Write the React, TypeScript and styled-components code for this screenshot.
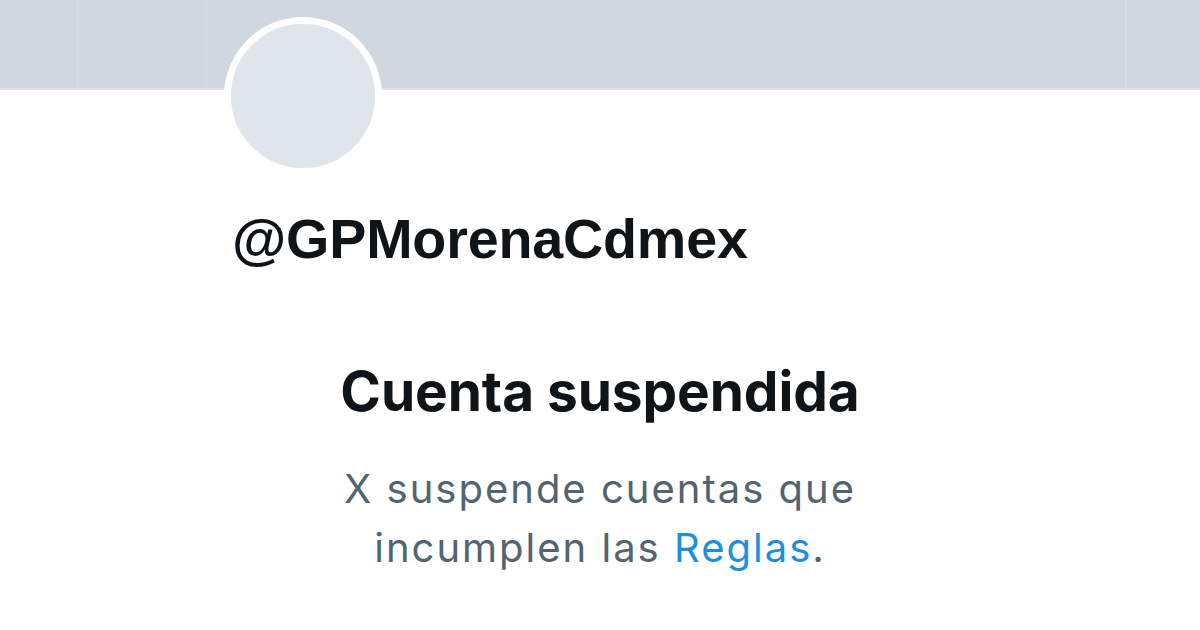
import React from "react";
import styled, { createGlobalStyle } from "styled-components";

const Global = createGlobalStyle`
  html, body { margin: 0; padding: 0; background: #ffffff; }
  body { width: 1200px; height: 630px; overflow: hidden; }
  * { box-sizing: border-box; }
`;

const Page = styled.div`
  width: 1200px;
  height: 630px;
  background: #ffffff;
  display: flex;
  flex-direction: column;
`;

const Banner = styled.div`
  height: 90px;
  flex: none;
  background:
    linear-gradient(#dbe2e6, #dbe2e6) 0 88px / 100% 2px no-repeat,
    linear-gradient(#d6dee2, #d6dee2) 77px 0 / 1px 88px no-repeat,
    linear-gradient(#d6dee2, #d6dee2) 206px 0 / 1px 88px no-repeat,
    linear-gradient(#d6dee2, #d6dee2) 1125px 0 / 2px 88px no-repeat,
    #cfd8de;
`;

const Profile = styled.div`
  padding-left: 224px;
  display: flex;
  flex-direction: column;
  align-items: flex-start;
`;

const Avatar = styled.div`
  width: 158px;
  height: 158px;
  margin-top: -73px;
  border-radius: 50%;
  border: 7px solid #ffffff;
  background: #dfe5ea;
`;

const Handle = styled.div`
  margin-top: 31px;
  margin-left: 8px;
  font-family: "Liberation Sans", Arial, sans-serif;
  font-weight: 700;
  font-size: 55.7px;
  line-height: 66px;
  color: #0f1419;
  letter-spacing: -0.2px;
`;

const Notice = styled.div`
  margin-top: 85px;
  display: flex;
  flex-direction: column;
  align-items: center;
  text-align: center;
  font-family: Inter, "Noto Sans", sans-serif;
`;

const Title = styled.h1`
  margin: 0;
  font-size: 55px;
  line-height: 68px;
  font-weight: 700;
  color: #0f1419;
  letter-spacing: -0.1px;
`;

const Body = styled.p`
  margin: 34px 0 0;
  font-size: 40px;
  line-height: 59px;
  font-weight: 400;
  color: #536471;
  letter-spacing: 2px;
`;

const RulesLink = styled.a`
  color: #1f8fdc;
  text-decoration: none;
`;

export default function App() {
  return (
    <Page>
      <Global />
      <Banner />
      <Profile>
        <Avatar />
        <Handle>@GPMorenaCdmex</Handle>
      </Profile>
      <Notice>
        <Title>Cuenta suspendida</Title>
        <Body>
          X suspende cuentas que
          <br />
          incumplen las <RulesLink href="#">Reglas</RulesLink>.
        </Body>
      </Notice>
    </Page>
  );
}
